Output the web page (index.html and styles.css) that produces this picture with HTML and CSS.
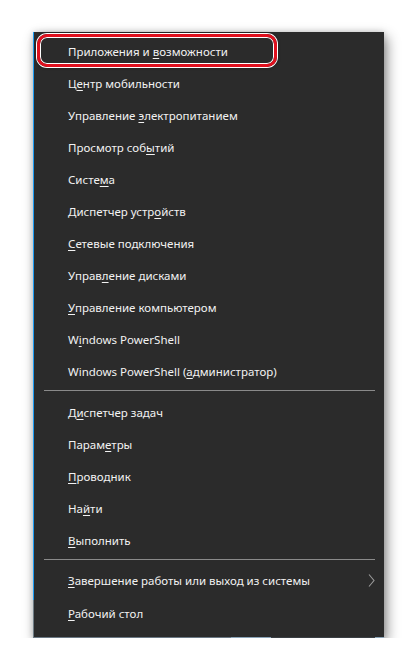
FILE: index.html
```html
<!DOCTYPE html>
<html lang="ru">
<head>
  <meta charset="UTF-8" />
  <title>Меню Win+X</title>
  <link rel="stylesheet" href="styles.css">
</head>
<body>
  <div class="menu">
    <ul class="group">
      <li class="item marked">Приложения и <u>в</u>озможности</li>
      <li class="item">Ц<u>е</u>нтр мобильности</li>
      <li class="item">Управление <u>э</u>лектропитанием</li>
      <li class="item">Просмотр соб<u>ы</u>тий</li>
      <li class="item">Систе<u>м</u>а</li>
      <li class="item">Диспетчер устр<u>о</u>йств</li>
      <li class="item"><u>С</u>етевые подключения</li>
      <li class="item">Управ<u>л</u>ение дисками</li>
      <li class="item"><u>У</u>правление компьютером</li>
      <li class="item">W<u>i</u>ndows PowerShell</li>
      <li class="item">Windows PowerShell (<u>а</u>дминистратор)</li>
    </ul>
    <div class="sep"></div>
    <ul class="group">
      <li class="item">Д<u>и</u>спетчер задач</li>
      <li class="item">Парам<u>е</u>тры</li>
      <li class="item"><u>П</u>роводник</li>
      <li class="item">На<u>й</u>ти</li>
      <li class="item"><u>В</u>ыполнить</li>
    </ul>
    <div class="sep"></div>
    <ul class="group">
      <li class="item sub">
        <span><u>З</u>авершение работы или выход из системы</span>
        <svg class="chev" width="7" height="13" viewBox="0 0 7 13"><path d="M1 0.5 L6 6.5 L1 12.5" fill="none" stroke="#9a9a9a" stroke-width="1.1"/></svg>
      </li>
      <li class="item"><u>Р</u>абочий стол</li>
    </ul>
    <div class="bottom-edge"></div>
  </div>
</body>
</html>
```

FILE: styles.css
```css
body {
  margin: 0;
  padding: 32px 0 0 33px;
  background: #ffffff;
  font-family: "Noto Sans", "Open Sans", sans-serif;
}
.menu {
  width: 351px;
  padding-top: 2px;
  background:
    linear-gradient(to bottom, #1e9cf2 0, #1e9cf2 568px, #6f7d86 568px) left top / 1px 100% no-repeat,
    #2b2b2b;
  box-shadow: 3px 5px 12px rgba(0, 0, 0, 0.45), 0 0 6px rgba(0, 0, 0, 0.15);
}
.group {
  list-style: none;
  margin: 0;
  padding: 0;
}
.item {
  height: 32px;
  line-height: 35px;
  padding-left: 35px;
  color: #f2f2f2;
  font-size: 11.5px;
  white-space: nowrap;
}
.item u {
  text-decoration-thickness: 1px;
  text-underline-offset: 2px;
}
.marked {
  position: relative;
}
.marked::after {
  content: "";
  position: absolute;
  left: 4px;
  top: 0;
  width: 240px;
  height: 33px;
  box-sizing: border-box;
  border: 3px solid #e0101e;
  border-radius: 10px;
  box-shadow: 0 0 0 1px #ffffff, inset 0 0 0 1px #ffffff, 0 0 3px 1px rgba(0, 0, 0, 0.35);
}
.sub {
  display: flex;
  align-items: center;
  justify-content: space-between;
  padding-right: 9px;
  line-height: 32px;
  padding-top: 1px;
  box-sizing: border-box;
}
.chev {
  display: block;
}
.sep {
  height: 1px;
  margin: 4px 9px 4px 11px;
  background: #8a8a8a;
}
.bottom-edge {
  height: 1px;
  margin-top: 9px;
  background: linear-gradient(to right, #6a7884 0, #6a7884 198px, #8aa4b8 198px, #8aa4b8 238px, #3a3f44 238px, #3a3f44 342px, #8aa4b8 342px);
}
```
